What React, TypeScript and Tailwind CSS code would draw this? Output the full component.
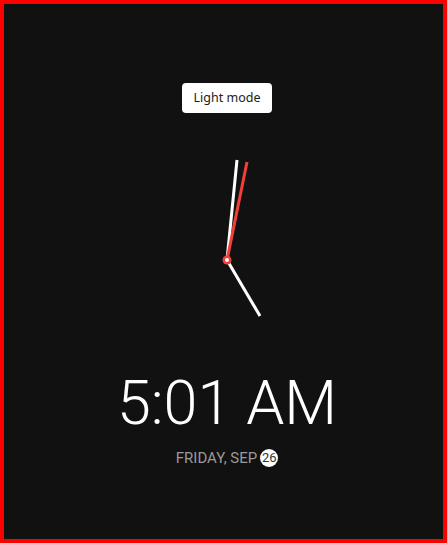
const CENTER = 110;

function ClockFace() {
  return (
    <svg width="220" height="220" viewBox="0 0 220 220" className="block">
      {/* hour hand */}
      <line x1={CENTER} y1={CENTER} x2={143} y2={166} stroke="#ffffff" strokeWidth="3" />
      {/* minute hand */}
      <line x1={CENTER} y1={CENTER} x2={120} y2={10} stroke="#ffffff" strokeWidth="3" />
      {/* second hand */}
      <line x1={CENTER} y1={CENTER} x2={130} y2={12} stroke="#f0403a" strokeWidth="3" />
      <circle cx={CENTER} cy={CENTER} r="4.5" fill="#f0403a" />
      <circle cx={CENTER} cy={CENTER} r="2" fill="#ffffff" />
    </svg>
  );
}

export default function App() {
  return (
    <div className="h-[543px] w-[447px] border-4 border-[#ff0000] bg-[#111111]">
      <div className="flex flex-col items-center pl-[7px] pt-[79px]">
        <button className="h-[30px] w-[90px] rounded-[4px] bg-white font-['Noto_Sans',sans-serif] text-[12.5px] text-[#222]">
          Light mode
        </button>

        <div className="mt-[37px]">
          <ClockFace />
        </div>

        <div className="mt-[3px] font-['Roboto',sans-serif] text-[61px] font-light leading-none text-white">
          5:01 AM
        </div>

        <div className="mt-[12px] flex items-center gap-[3px] font-['Roboto',sans-serif] text-[15px] leading-6 text-[#9a9a9a]">
          <span>FRIDAY, SEP</span>
          <span className="flex h-[18px] w-[18px] items-center justify-center rounded-full bg-white text-[13px] text-[#333]">
            26
          </span>
        </div>
      </div>
    </div>
  );
}
